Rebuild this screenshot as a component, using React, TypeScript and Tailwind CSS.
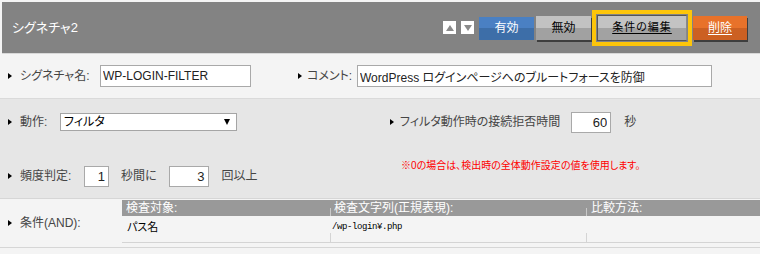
function Bullet() {
  return (
    <span className="block w-0 h-0 border-y-[3px] border-y-transparent border-l-[4px] border-l-black" />
  );
}

function Label({ text, gap = "mr-[8px]" }: { text: string; gap?: string }) {
  return (
    <span className="flex items-center">
      <span className={`${gap} flex items-center`}>
        <Bullet />
      </span>
      <span className="text-[12px] text-[#454545] leading-[14px] whitespace-nowrap">{text}</span>
    </span>
  );
}

export default function App() {
  return (
    <div className="w-[760px] h-[254px] overflow-hidden bg-[#f4f4f4] font-['Liberation_Sans','Noto_Sans_CJK_JP',sans-serif] [font-feature-settings:'palt']">
      {/* header */}
      <div className="ml-[2px] mt-[2px] h-[51px] bg-[#838383] flex items-center">
        <span className="pl-[10px] text-[13px] text-white">シグネチャ2</span>
        <div className="ml-auto pr-[13px] flex items-center">
          <div className="flex items-center gap-[5px] mr-[5px]">
            <span className="w-[13px] h-[13px] bg-white flex items-center justify-center">
              <span className="w-0 h-0 border-x-[4px] border-x-transparent border-b-[6px] border-b-[#8a8a8a]" />
            </span>
            <span className="w-[13px] h-[13px] bg-white flex items-center justify-center">
              <span className="w-0 h-0 border-x-[4px] border-x-transparent border-t-[6px] border-t-[#8a8a8a]" />
            </span>
          </div>
          <button className="w-[55px] h-[23px] mt-[1px] bg-[linear-gradient(#4a80c3_50%,#3d6ea8_50%)] text-white text-[12px] flex items-center justify-center">
            有効
          </button>
          <button className="ml-[2px] w-[55px] h-[24px] bg-[linear-gradient(#c2c2c2_50%,#a1a1a1_50%)] text-black text-[12px] shadow-[1px_2px_0_#3e3e3e] flex items-center justify-center">
            無効
          </button>
          <div className="ml-px w-[100px] h-[36px] border-4 border-[#fdc50a] p-px flex">
            <button className="flex-1 bg-[linear-gradient(#c3c3c3_50%,#a2a2a2_50%)] border border-[#555] border-r-[#8a8a8a] text-black text-[11px] tracking-[1px] underline underline-offset-2 flex items-center justify-center">
              条件の編集
            </button>
          </div>
          <button className="ml-px w-[54px] h-[24px] bg-[linear-gradient(#e8722a_50%,#cc6022_50%)] text-white text-[12px] underline underline-offset-2 shadow-[1px_2px_0_#3e3e3e] flex items-center justify-center">
            削除
          </button>
        </div>
      </div>
      <div className="h-px ml-[2px] bg-[#d8d8d8]" />

      {/* row 1 */}
      <div className="h-[45px] flex items-center border-b border-[#dadada] pl-[8px]">
        <div className="w-[92px]">
          <Label text="シグネチャ名:" />
        </div>
        <input
          readOnly
          value="WP-LOGIN-FILTER"
          className="w-[151px] h-[22px] bg-white border border-[#a9a9a9] px-[2px] text-[12px] text-[#222] outline-none"
        />
        <div className="ml-[47px] w-[59px]">
          <Label text="コメント:" gap="mr-[5px]" />
        </div>
        <input
          readOnly
          value="WordPress ログインページへのブルートフォースを防御"
          className="w-[355px] h-[22px] bg-white border border-[#a9a9a9] px-[2px] text-[12px] text-[#222] outline-none"
        />
      </div>

      {/* row 2 */}
      <div className="h-[100px] bg-[#e6e6e6] border-b border-[#d6d6d6] flex">
        <div className="w-[390px] pl-[8px] pt-[12px] flex flex-col">
          <div className="h-[22px] flex items-center">
            <div className="w-[52px]">
              <Label text="動作:" />
            </div>
            <div className="w-[177px] h-[18px] bg-white border border-[#a5a5a5] flex items-center pl-[3px] pr-[6px] text-[12px] text-black">
              <span>フィルタ</span>
              <span className="ml-auto w-0 h-0 border-x-[3px] border-x-transparent border-t-[6px] border-t-black" />
            </div>
          </div>
          <div className="mt-[32px] h-[22px] flex items-center">
            <div className="w-[76px]">
              <Label text="頻度判定:" />
            </div>
            <input
              readOnly
              value="1"
              className="w-[25px] h-[21px] bg-white border border-[#a9a9a9] pr-[3px] text-right text-[13px] text-[#222] outline-none"
            />
            <span className="ml-[12px] text-[12px] text-[#454545]">秒間に</span>
            <input
              readOnly
              value="3"
              className="ml-[12px] w-[40px] h-[21px] bg-white border border-[#a9a9a9] pr-[3px] text-right text-[13px] text-[#222] outline-none"
            />
            <span className="ml-[13px] text-[12px] text-[#454545]">回以上</span>
          </div>
        </div>
        <div className="flex-1 pt-[12px] flex flex-col">
          <div className="h-[22px] flex items-center">
            <Label text="フィルタ動作時の接続拒否時間" gap="mr-[6px]" />
            <input
              readOnly
              value="60"
              className="ml-[11px] w-[40px] h-[21px] bg-white border border-[#a9a9a9] pr-[3px] text-right text-[13px] text-[#222] outline-none"
            />
            <span className="ml-[13px] text-[12px] text-[#454545]">秒</span>
          </div>
          <p className="mt-[26px] ml-[11px] h-[14px] leading-[14px] text-[10px] text-[#ff0000] whitespace-nowrap">
            ※0の場合は、検出時の全体動作設定の値を使用します。
          </p>
        </div>
      </div>

      {/* row 3 */}
      <div className="h-[49px] flex border-b border-[#d6d6d6]">
        <div className="w-[122px] pl-[8px] flex items-center">
          <Label text="条件(AND):" />
        </div>
        <div className="flex-1 pt-px flex flex-col">
          <div className="h-[16px] bg-[#999999] flex text-[12px] text-white leading-[16px]">
            <div className="w-[208px] pl-[4px]">検査対象:</div>
            <div className="relative w-[256px] pl-[4px]">
              <span className="absolute left-0 bottom-0 w-px h-[8px] bg-[#c9c9c9]" />
              検査文字列(正規表現):
            </div>
            <div className="relative flex-1 pl-[5px]">
              <span className="absolute left-0 bottom-0 w-px h-[8px] bg-[#c9c9c9]" />
              比較方法:
            </div>
          </div>
          <div className="h-[27px] flex border-b border-[#d4d4d4]">
            <div className="w-[208px] pl-[5px] pt-[5px] text-[11px] leading-[12px] text-black">パス名</div>
            <div className="relative w-[256px] pl-[2px] pt-[5px] font-['Liberation_Mono','Noto_Sans_CJK_JP',monospace] text-[9px] tracking-[-0.4px] leading-[12px] text-black">
              <span className="absolute left-0 bottom-0 w-px h-[9px] bg-[#d4d4d4]" />
              /wp-login¥.php
            </div>
            <div className="relative flex-1">
              <span className="absolute left-0 bottom-0 w-px h-[9px] bg-[#d4d4d4]" />
            </div>
          </div>
        </div>
      </div>
    </div>
  );
}
